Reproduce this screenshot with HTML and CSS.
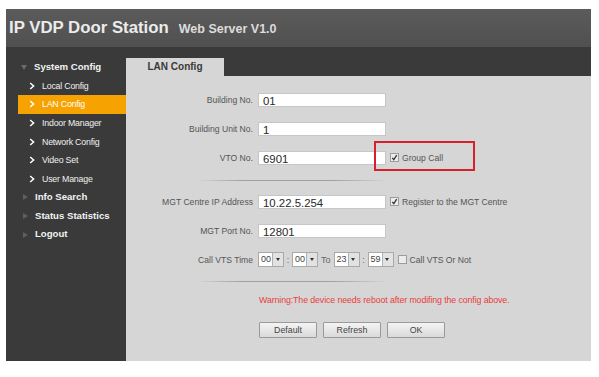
FILE: index.html
```html
<!DOCTYPE html>
<html>
<head>
    <title>IP VDP Door Station</title>
    <link rel="stylesheet" href="styles.css">
</head>
<body>

<div class="frame">
    <div class="header">
        <span class="title">IP VDP Door Station</span>
        <span class="subtitle">Web Server V1.0</span>
    </div>

    <div class="main">
        <!-- Меню слева -->
        <div class="sidebar">
            <div class="group"><span class="tri tri-down"></span>System Config</div>
            <ul class="submenu">
                <li><svg class="chev" viewBox="0 0 6 8"><path d="M1.2 1 L4.6 4 L1.2 7"/></svg>Local Config</li>
                <li class="current"><svg class="chev" viewBox="0 0 6 8"><path d="M1.2 1 L4.6 4 L1.2 7"/></svg>LAN Config</li>
                <li><svg class="chev" viewBox="0 0 6 8"><path d="M1.2 1 L4.6 4 L1.2 7"/></svg>Indoor Manager</li>
                <li><svg class="chev" viewBox="0 0 6 8"><path d="M1.2 1 L4.6 4 L1.2 7"/></svg>Network Config</li>
                <li><svg class="chev" viewBox="0 0 6 8"><path d="M1.2 1 L4.6 4 L1.2 7"/></svg>Video Set</li>
                <li><svg class="chev" viewBox="0 0 6 8"><path d="M1.2 1 L4.6 4 L1.2 7"/></svg>User Manage</li>
            </ul>
            <div class="group"><span class="tri tri-right"></span>Info Search</div>
            <div class="group"><span class="tri tri-right"></span>Status Statistics</div>
            <div class="group"><span class="tri tri-right"></span>Logout</div>
        </div>

        <!-- Содержимое -->
        <div class="content">
            <div class="tabs">
                <div class="tab">LAN Config</div>
            </div>
            <div class="panel">
                <div class="block first">
                    <div class="row">
                        <label>Building No.</label>
                        <div class="field">01</div>
                    </div>
                    <div class="row">
                        <label>Building Unit No.</label>
                        <div class="field">1</div>
                    </div>
                    <div class="row">
                        <label>VTO No.</label>
                        <div class="field">6901</div>
                        <span class="checkbox checked"><svg viewBox="0 0 6 6"><path d="M1.1 3.3 L2.4 4.9 L4.9 1"/></svg></span>
                        <span class="check-label">Group Call</span>
                        <div class="callout"></div>
                    </div>
                </div>

                <div class="divider"></div>

                <div class="block second">
                    <div class="row">
                        <label>MGT Centre IP Address</label>
                        <div class="field">10.22.5.254</div>
                        <span class="checkbox checked"><svg viewBox="0 0 6 6"><path d="M1.1 3.3 L2.4 4.9 L4.9 1"/></svg></span>
                        <span class="check-label">Register to the MGT Centre</span>
                    </div>
                    <div class="row">
                        <label>MGT Port No.</label>
                        <div class="field">12801</div>
                    </div>
                    <div class="row">
                        <label>Call VTS Time</label>
                        <div class="select"><span class="sel-value">00</span><span class="sel-btn"></span></div>
                        <span class="sep">:</span>
                        <div class="select"><span class="sel-value">00</span><span class="sel-btn"></span></div>
                        <span class="sep to">To</span>
                        <div class="select"><span class="sel-value">23</span><span class="sel-btn"></span></div>
                        <span class="sep">:</span>
                        <div class="select"><span class="sel-value">59</span><span class="sel-btn"></span></div>
                        <span class="checkbox"></span>
                        <span class="check-label">Call VTS Or Not</span>
                    </div>
                </div>

                <div class="divider"></div>

                <div class="warning">Warning:The device needs reboot after modifing the config above.</div>

                <div class="buttons">
                    <button>Default</button>
                    <button>Refresh</button>
                    <button>OK</button>
                </div>
            </div>
        </div>
    </div>
</div>

</body>
</html>
```

FILE: styles.css
```css
body {
    margin: 0;
    background: #fff;
    font-family: "Liberation Sans", Arial, sans-serif;
}
.frame {
    margin: 9px 0 0 6px;
    width: 585px;
}

/* Шапка */
.header {
    height: 38px;
    background: linear-gradient(#5b5b5b, #505050);
    display: flex;
    align-items: center;
    padding-left: 3px;
    white-space: nowrap;
}
.title {
    font-size: 16.8px;
    font-weight: bold;
    color: #ececec;
}
.subtitle {
    font-size: 12.5px;
    font-weight: bold;
    color: #dcdcdc;
    margin-left: 10px;
    margin-top: 2px;
}

.main {
    display: flex;
    height: 314px;
    background: #3a3a3a;
}

/* Меню */
.sidebar {
    width: 120px;
    padding-top: 11px;
    box-sizing: border-box;
}
.group {
    height: 18.6px;
    line-height: 18.6px;
    display: flex;
    align-items: center;
    font-size: 9.6px;
    font-weight: bold;
    color: #f2f2f2;
    padding-left: 14px;
}
.tri {
    width: 0; height: 0;
}
.tri-down {
    border-left: 3.5px solid transparent;
    border-right: 3.5px solid transparent;
    border-top: 5px solid #6a6a6a;
    margin-left: 1px;
    margin-right: 7px;
}
.tri-right {
    border-top: 3.5px solid transparent;
    border-bottom: 3.5px solid transparent;
    border-left: 5px solid #5e5e5e;
    margin-left: 3px;
    margin-right: 7px;
}
.submenu {
    list-style: none;
    margin: 0;
    padding: 0;
}
.submenu li {
    height: 18.6px;
    display: flex;
    align-items: center;
    font-size: 8.8px;
    color: #f0f0f0;
    padding-left: 23px;
    letter-spacing: -0.2px;
}
.submenu li.current {
    background: #f6a200;
    margin-left: 12px;
    padding-left: 11px;
    color: #fff;
}
.chev {
    width: 6px;
    height: 8px;
    margin-right: 7px;
    fill: none;
    stroke: #fff;
    stroke-width: 1.5;
}

/* Вкладки и панель */
.content {
    flex: 1;
    display: flex;
    flex-direction: column;
}
.tabs {
    height: 29px;
    display: flex;
    align-items: flex-end;
}
.tab {
    width: 98px;
    height: 18px;
    line-height: 18px;
    background: #d6d6d6;
    text-align: center;
    font-size: 10px;
    font-weight: bold;
    color: #3a3a3a;
}
.panel {
    flex: 1;
    background: #d6d6d6;
    padding-top: 9px;
}

.row {
    position: relative;
    height: 29px;
    display: flex;
    align-items: center;
}
.row label {
    width: 127px;
    margin-right: 5px;
    text-align: right;
    font-size: 8.6px;
    color: #555;
}
.field {
    width: 128px;
    height: 14px;
    line-height: 14px;
    box-sizing: border-box;
    background: #fff;
    border: 1px solid #c6c6c6;
    padding-left: 4px;
    font-size: 11.4px;
    color: #2a2a2a;
}
.checkbox {
    width: 7px;
    height: 7px;
    border: 1px solid #9c9c9c;
    background: #ececec;
    margin-left: 4px;
    display: flex;
}
.checkbox svg {
    width: 7px;
    height: 7px;
    fill: none;
    stroke: #333;
    stroke-width: 1.1;
}
.check-label {
    margin-left: 3px;
    font-size: 8.6px;
    color: #555;
}
.callout {
    position: absolute;
    left: 248px;
    top: -2px;
    width: 101px;
    height: 30px;
    box-sizing: border-box;
    border: 2px solid #d8202a;
}

.divider {
    height: 1px;
    width: 195px;
    margin-left: 69px;
    background: linear-gradient(to right, rgba(150,150,150,0), #a0a0a0 25%, #a0a0a0 70%, rgba(150,150,150,0));
}
.block.first + .divider { margin-top: 8px; }
.block.second { margin-top: 6px; }
.block.second + .divider { margin-top: 7px; }

/* Выпадающие списки времени */
.select {
    width: 26px;
    height: 15px;
    box-sizing: border-box;
    border: 1px solid #a9a9a9;
    background: #fff;
    display: flex;
}
.sel-value {
    flex: 1;
    font-size: 9px;
    line-height: 13px;
    padding-left: 2px;
    color: #444;
}
.sel-btn {
    width: 10px;
    background: #e2e2e2;
    border-left: 1px solid #b0b0b0;
    position: relative;
}
.sel-btn::after {
    content: "";
    position: absolute;
    left: 2.5px;
    top: 5px;
    border-left: 2.5px solid transparent;
    border-right: 2.5px solid transparent;
    border-top: 3px solid #333;
}
.sep {
    width: 8px;
    text-align: center;
    font-size: 9px;
    color: #666;
}
.sep.to {
    width: auto;
    margin: 0 3px;
}

.warning {
    margin-top: 12px;
    padding-left: 133px;
    font-size: 8.8px;
    line-height: 12px;
    color: #e8403c;
    letter-spacing: -0.1px;
}
.buttons {
    margin-top: 16px;
    padding-left: 133px;
    display: flex;
    gap: 6px;
}
.buttons button {
    width: 58px;
    height: 16px;
    margin: 0;
    padding: 0;
    border: 1px solid #9a9a9a;
    border-radius: 1px;
    background: linear-gradient(#f4f4f4, #d9d9d9);
    font-family: "Liberation Sans", Arial, sans-serif;
    font-size: 8.8px;
    color: #444;
}
```
